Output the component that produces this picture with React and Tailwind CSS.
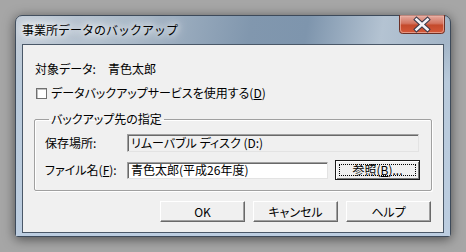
import React from 'react';

const jp = "font-['MS_UI_Gothic','Noto_Sans_CJK_JP',sans-serif]";

const Btn = ({ children, isDefault }) => (
  <div
    className={
      'h-full flex items-center justify-center bg-[#f0f0f0] border ' +
      (isDefault
        ? 'border-[#1a1a1a] shadow-[inset_1px_1px_0_#fff,inset_-1px_-1px_0_#7a7a7a]'
        : 'border-t-white border-l-white border-r-[#696969] border-b-[#696969] shadow-[inset_-1px_-1px_0_#a0a0a0]')
    }
  >
    {isDefault ? (
      <div className="flex items-center justify-center w-[calc(100%-6px)] h-[calc(100%-6px)] border border-dotted border-black">
        {children}
      </div>
    ) : (
      children
    )}
  </div>
);

const CloseIcon = () => (
  <svg width="46" height="19" viewBox="0 0 46 19">
    <defs>
      <linearGradient id="cg" x1="0" y1="0" x2="0" y2="1">
        <stop offset="0" stopColor="#e7b0a6" />
        <stop offset="0.45" stopColor="#d37460" />
        <stop offset="0.55" stopColor="#c44a2c" />
        <stop offset="1" stopColor="#d6593a" />
      </linearGradient>
    </defs>
    <path d="M0.5 0 H45.5 V15.5 Q45.5 18.5 42.5 18.5 H3.5 Q0.5 18.5 0.5 15.5 Z" fill="url(#cg)" stroke="#6b3026" />
    <path d="M1.5 1 H44.5 V15 Q44.5 17.5 42 17.5 H4 Q1.5 17.5 1.5 15 Z" fill="none" stroke="#f1c3b8" strokeOpacity="0.6" />
    <path d="M17.5 4.5 L28.5 14.5 M28.5 4.5 L17.5 14.5" stroke="#3a3a4a" strokeWidth="4.6" strokeLinecap="square" />
    <path d="M17.5 4.5 L28.5 14.5 M28.5 4.5 L17.5 14.5" stroke="#f4f4f8" strokeWidth="2.6" strokeLinecap="square" />
  </svg>
);

export default function App() {
  return (
    <div className={`w-[466px] h-[252px] bg-[#a6a6a6] pt-[15px] pl-[15px] ${jp} text-[12px] leading-[16px] text-black`}>
      <div className="w-[436px] h-[222px] rounded-t-[7px] rounded-b-[3px] border border-[#3d4a5a] bg-[linear-gradient(100deg,#c3cdd8_0%,#aab9c8_25%,#8197ae_50%,#7e95ad_62%,#b4c3d2_78%,#a3b5c7_92%,#b5c6d6_100%)] shadow-[0_2px_12px_rgba(0,0,0,0.55)] flex flex-col">
        <div className="h-[28px] flex items-start pl-[6px] pr-[5px]">
          <div className="mt-[6px] text-[12px] leading-[16px] text-black [text-shadow:0_0_6px_#fff,0_0_10px_#fff,0_0_14px_#fff]">
            事業所データのバックアップ
          </div>
          <div className="ml-auto -mt-[1px]">
            <CloseIcon />
          </div>
        </div>
        <div className="flex-1 px-[6px] pb-[3px] bg-[linear-gradient(180deg,transparent,#b9cadb_20%,#bccde0)]">
          <div className="h-full border border-[#4a5868] bg-[#f0f0f0] pt-[16px] pl-[11px] pr-[12px] flex flex-col [font-feature-settings:'palt']">
            <div className="h-[16px] flex items-center pl-[1px]">
              <span className="w-[73px]">対象データ:</span>
              <span>青色太郎</span>
            </div>
            <div className="h-[16px] mt-[8px] flex items-center pl-[2px]">
              <div className="w-[11px] h-[11px] bg-white border border-[#707070] shadow-[inset_1px_1px_0_#c0c0c0]" />
              <span className="ml-[4px]">
                データバックアップサービスを使用する(<span className="underline">D</span>)
              </span>
            </div>
            <fieldset className="mt-[10px] border border-[#a0a0a0] shadow-[inset_1px_1px_0_#fff,1px_1px_0_#fff] pl-[10px] pr-[11px] pb-[10px] rounded-[2px]">
              <legend className="ml-[4px] px-[2px] leading-[16px]">バックアップ先の指定</legend>
              <div className="mt-[7px] h-[18px] flex items-center">
                <span className="w-[82px]">保存場所:</span>
                <div className="w-[292px] h-[18px] flex items-center pl-[3px] bg-[#f0f0f0] border border-t-[#a0a0a0] border-l-[#a0a0a0] border-r-[#e3e3e3] border-b-[#e3e3e3] shadow-[inset_1px_1px_0_#696969]">
                  リムーバブル ディスク (D:)
                </div>
              </div>
              <div className="mt-[8px] h-[20px] flex items-center">
                <span className="w-[82px]">
                  ファイル名(<span className="underline">F</span>):
                </span>
                <div className="w-[201px] h-[17px] flex items-center pl-[3px] bg-white border border-t-[#a0a0a0] border-l-[#a0a0a0] border-r-[#e3e3e3] border-b-[#e3e3e3] shadow-[inset_1px_1px_0_#696969]">
                  青色太郎(平成26年度)
                </div>
                <div className="ml-[7px] w-[85px] h-[20px]">
                  <Btn isDefault>
                    参照(<span className="underline">B</span>)...
                  </Btn>
                </div>
              </div>
            </fieldset>
            <div className="mt-[10px] h-[21px] flex justify-end gap-[8px]">
              <div className="w-[85px] h-full"><Btn>OK</Btn></div>
              <div className="w-[85px] h-full"><Btn>キャンセル</Btn></div>
              <div className="w-[85px] h-full"><Btn>ヘルプ</Btn></div>
            </div>
          </div>
        </div>
      </div>
    </div>
  );
}
